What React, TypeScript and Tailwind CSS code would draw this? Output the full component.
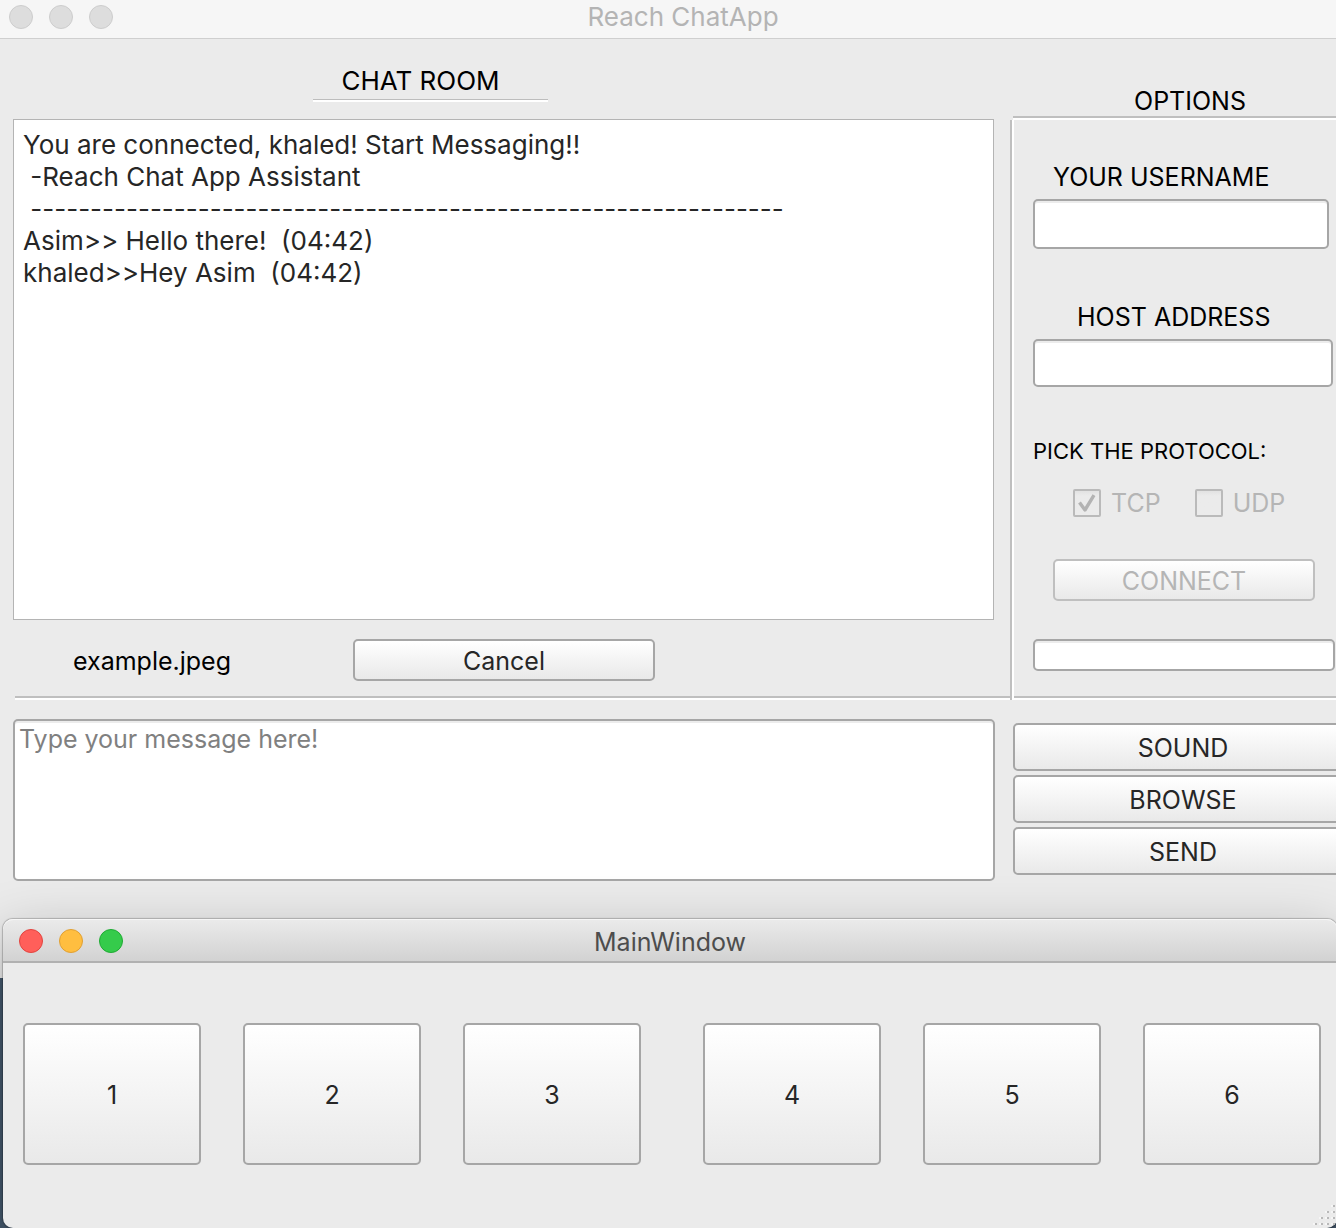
import React from "react";
import clsx from "clsx";

const buttonBase =
  "flex items-center justify-center rounded-[5px] border-2 bg-linear-to-b from-white to-[#e9e9e9] pt-[2px] text-[25px] leading-8";
const fieldBase =
  "block rounded-[5px] border-2 border-[#a6a6a6] bg-white px-1 text-[25px] text-[#262626] shadow-[inset_0_2px_0_#ececec] outline-none";

const log = [
  "You are connected, khaled! Start Messaging!!",
  " -Reach Chat App Assistant",
  " " + "-".repeat(63),
  "Asim>> Hello there!  (04:42)",
  "khaled>>Hey Asim  (04:42)",
];

function PushButton({
  children,
  className,
  disabled,
}: {
  children: React.ReactNode;
  className?: string;
  disabled?: boolean;
}) {
  return (
    <button
      type="button"
      disabled={disabled}
      className={clsx(
        buttonBase,
        disabled ? "border-[#bfbfbf] text-[#b5b5b5]" : "border-[#a6a6a6] text-[#262626]",
        className,
      )}
    >
      {children}
    </button>
  );
}

function ProtocolBox({ label, checked }: { label: string; checked?: boolean }) {
  return (
    <label className="flex items-center gap-[10px] text-[25px] leading-8 text-[#b5b5b5]">
      <span className="grid">
        <input
          type="checkbox"
          disabled
          defaultChecked={checked}
          className="col-start-1 row-start-1 size-7 appearance-none rounded-[2px] border-2 border-[#bababa] bg-linear-to-b from-[#e2e2e2] via-[#ebebeb] via-20% to-[#ebebeb]"
        />
        {checked && (
          <svg viewBox="0 0 28 28" className="pointer-events-none col-start-1 row-start-1 size-7" fill="none">
            <path d="M6.5 13.5 L12 21 L21 6.2" stroke="#b3b3b3" strokeWidth="3.4" strokeLinejoin="round" />
          </svg>
        )}
      </span>
      {label}
    </label>
  );
}

function Light({ name, className }: { name: string; className: string }) {
  return <button type="button" aria-label={name} className={clsx("size-6 rounded-full border", className)} />;
}

function Groove() {
  return <div className="h-1 border-t-2 border-[#bfbfbf] bg-white" />;
}

function ChatWindow() {
  return (
    <section className="-mr-[30px] bg-[#ebebeb] pb-[97px]">
      <header className="grid h-[39px] grid-cols-[1fr_auto_1fr] items-center border-b border-[#cfcfcf] bg-[#f6f6f6] pb-1">
        <div className="flex gap-4 pl-[9px]">
          <Light name="Close" className="border-[#cdcdcd] bg-[#dddddd]" />
          <Light name="Minimize" className="border-[#cdcdcd] bg-[#dddddd]" />
          <Light name="Zoom" className="border-[#cdcdcd] bg-[#dddddd]" />
        </div>
        <h1 className="text-[26px] leading-8 text-[#b4b4b4]">Reach ChatApp</h1>
      </header>

      <div className="flex">
        <div className="min-w-0 flex-1">
          <div className="flex h-20 pt-[26px] pl-[313px]">
            <h2 className="h-[37px] w-[235px] border-b-2 border-white pr-5 text-center text-[26px] leading-8 text-black shadow-[inset_0_-1px_0_#bdbdbd]">
              CHAT ROOM
            </h2>
          </div>
          <div
            role="log"
            className="mr-4 ml-[13px] h-[501px] border border-[#b4b4b4] bg-white px-[9px] py-[9px] text-[26px] leading-8 whitespace-pre text-[#262626]"
          >
            {log.map((line) => (
              <p key={line}>{line}</p>
            ))}
          </div>
          <div className="flex h-[76px] items-center pt-1 pl-[73px]">
            <span className="w-[280px] pt-[2px] text-[25px] leading-8 text-black">example.jpeg</span>
            <PushButton className="h-[42px] w-[302px]">Cancel</PushButton>
          </div>
          <div className="pl-[15px]">
            <Groove />
          </div>
        </div>

        <aside className="flex w-[356px] flex-col">
          <h2 className="h-[77px] pt-[46px] pl-1 text-center text-[25px] leading-8 text-black">OPTIONS</h2>
          <div className="pl-[3px]">
            <Groove />
          </div>
          <div className="flex flex-1 border-l-2 border-[#bfbfbf]">
            <div className="w-[2px] bg-white" />
            <div className="flex flex-1 flex-col">
              <div className="flex flex-1 flex-col items-start pl-[19px]">
                <label htmlFor="username" className="mt-[41px] ml-5 text-[25px] leading-8 text-black">
                  YOUR USERNAME
                </label>
                <input id="username" type="text" className={clsx(fieldBase, "mt-[6px] h-[50px] w-[296px]")} />
                <label htmlFor="host" className="mt-[52px] ml-11 text-[25px] leading-8 text-black">
                  HOST ADDRESS
                </label>
                <input id="host" type="text" className={clsx(fieldBase, "mt-[6px] h-12 w-[300px]")} />
                <p className="mt-12 text-[22px] leading-8 text-black">PICK THE PROTOCOL:</p>
                <div className="mt-5 ml-10 flex gap-[34px]">
                  <ProtocolBox label="TCP" checked />
                  <ProtocolBox label="UDP" />
                </div>
                <PushButton disabled className="mt-10 ml-5 h-[42px] w-[262px]">
                  CONNECT
                </PushButton>
                <input aria-label="Status" type="text" className={clsx(fieldBase, "mt-[38px] h-8 w-[302px]")} />
              </div>
              <Groove />
            </div>
          </div>
        </aside>
      </div>

      <div className="flex gap-[18px] pt-[19px] pr-[13px] pl-[13px]">
        <textarea
          aria-label="Message"
          placeholder="Type your message here!"
          className={clsx(
            fieldBase,
            "h-[162px] min-w-0 flex-1 resize-none py-[2px] leading-8 placeholder:text-[#808080] placeholder:opacity-100",
          )}
        />
        <div className="flex w-[340px] flex-col gap-1 pt-1">
          <PushButton className="h-12">SOUND</PushButton>
          <PushButton className="h-12">BROWSE</PushButton>
          <PushButton className="h-12">SEND</PushButton>
        </div>
      </div>
    </section>
  );
}

function Pad({ keys }: { keys: number[] }) {
  return (
    <div className="flex flex-1 gap-[42px]">
      {keys.map((k) => (
        <PushButton key={k} className="h-[142px] flex-1">
          {k}
        </PushButton>
      ))}
    </div>
  );
}

function MainWindow() {
  return (
    <section className="relative -mt-[59px] -mr-[1px] ml-[3px] rounded-[10px] bg-[#ebebeb] shadow-[0_20px_60px_rgba(0,0,0,0.3),0_0_1px_1px_rgba(0,0,0,0.22)]">
      <header className="grid h-11 grid-cols-[1fr_auto_1fr] items-center rounded-t-[10px] border-b-2 border-[#b1b1b1] bg-linear-to-b from-[#ebebeb] to-[#d2d2d2] pt-[2px] shadow-[inset_0_1px_0_#f6f6f6]">
        <div className="flex gap-4 pl-4">
          <Light name="Close" className="border-[#e2443f] bg-[#ff5f5a]" />
          <Light name="Minimize" className="border-[#e0a033] bg-[#ffbe40]" />
          <Light name="Zoom" className="border-[#1fab33] bg-[#35cb4b]" />
        </div>
        <h2 className="pt-[2px] text-[25px] leading-8 text-[#4d4d4d]">MainWindow</h2>
      </header>
      <div className="flex gap-[62px] px-5 pt-[60px] pr-4">
        <Pad keys={[1, 2, 3]} />
        <Pad keys={[4, 5, 6]} />
      </div>
      <div className="flex h-[63px] items-end justify-end">
        <svg viewBox="0 0 24 24" className="size-6" fill="#b9b9b9" aria-hidden="true">
          {[0, 1, 2, 3].map((row) =>
            Array.from({ length: row + 1 }, (_, i) => (
              <g key={`${row}-${i}`}>
                <rect x={20 - i * 6} y={1 + row * 6} width="2" height="2" />
                <rect x={18 - i * 6} y={1 + row * 6} width="2" height="2" fill="#f6f6f6" />
              </g>
            )),
          )}
        </svg>
      </div>
    </section>
  );
}

export default function App() {
  return (
    <main className="overflow-hidden bg-[#44586c] font-['Inter','Liberation_Sans',sans-serif]">
      <ChatWindow />
      <MainWindow />
    </main>
  );
}
